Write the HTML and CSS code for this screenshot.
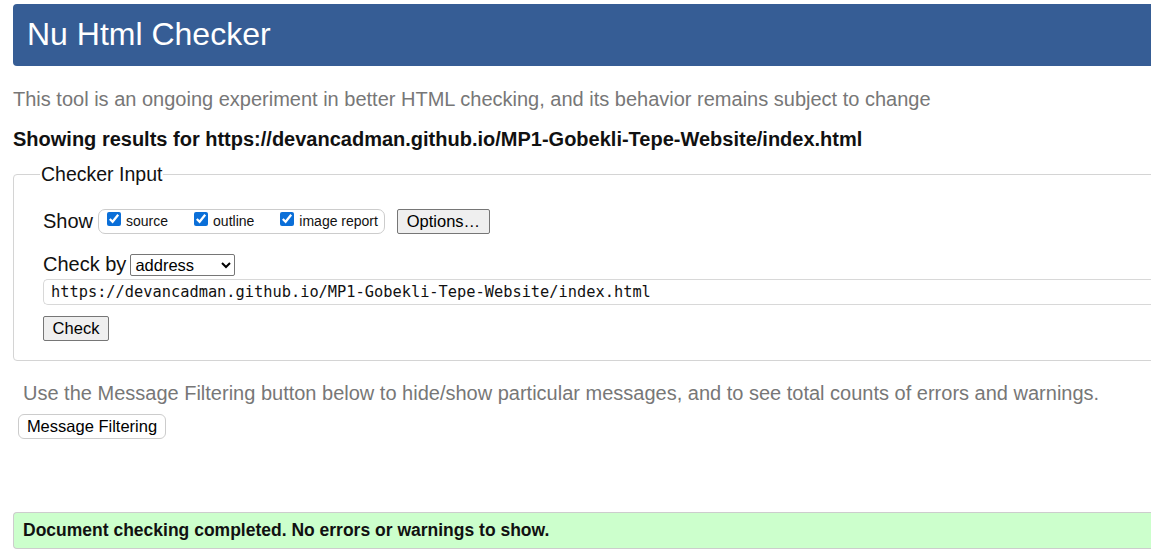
FILE: index.html
```html
<!DOCTYPE html>
<html lang="en">
<head>
<meta charset="utf-8">
<title>Nu Html Checker</title>
<link rel="stylesheet" href="styles.css">
</head>
<body>
<h1 class="title">Nu Html Checker</h1>
<p class="intro">This tool is an ongoing experiment in better HTML checking, and its behavior remains subject to change</p>
<p class="showing">Showing results for https://devancadman.github.io/MP1-Gobekli-Tepe-Website/index.html</p>
<fieldset class="input">
  <legend>Checker Input</legend>
  <div class="row show-row">
    <span class="label">Show</span>
    <span class="pill">
      <label><input type="checkbox" checked> source</label>
      <label><input type="checkbox" checked> outline</label>
      <label><input type="checkbox" checked> image report</label>
    </span>
    <button class="btn options">Options…</button>
  </div>
  <div class="row by-row">
    <span class="label">Check by</span>
    <select class="sel"><option>address</option></select>
  </div>
  <div class="url">https://devancadman.github.io/MP1-Gobekli-Tepe-Website/index.html</div>
  <button class="btn check">Check</button>
</fieldset>
<p class="filter-note">Use the Message Filtering button below to hide/show particular messages, and to see total counts of errors and warnings.</p>
<button class="btn filter">Message Filtering</button>
<div class="success">Document checking completed. No errors or warnings to show.</div>
</body>
</html>
```
FILE: styles.css
```css
html, body { margin: 0; padding: 0; }
body {
  font-family: "Liberation Sans", Arial, sans-serif;
  background: #fff;
  color: #111;
  padding: 4px 0 0 13px;
  width: 1200px;
  overflow: hidden;
}
.title {
  margin: 0;
  height: 62px;
  box-sizing: border-box;
  background: #365d95;
  color: #fff;
  font-weight: normal;
  font-size: 32px;
  line-height: 60px;
  padding-left: 14px;
  border-radius: 4px 0 0 4px;
}
.intro {
  margin: 21px 0 0 0;
  font-size: 20px;
  line-height: 24px;
  color: #777;
}
.showing {
  margin: 16px 0 0 0;
  font-size: 20px;
  line-height: 24px;
  font-weight: bold;
  color: #111;
}
.input {
  margin: 12px 0 0 0;
  border: 1px solid #d4d4d4;
  border-radius: 4px 0 0 4px;
  padding: 4px 0 19px 29px;
  min-width: 0;
}
.input legend {
  font-size: 19.5px;
  padding: 0 1px;
  margin-left: -3px;
}
.row { display: flex; align-items: center; }
.label { font-size: 20px; margin-right: 5px; }
.show-row { margin-top: 18px; height: 26px; }
.pill {
  display: inline-flex;
  align-items: center;
  border: 1px solid #ccc;
  border-radius: 7px;
  height: 23px;
  padding: 0 6px 0 8px;
  font-size: 14px;
}
.pill label { display: inline-flex; align-items: center; margin-right: 26px; }
.pill label:last-child { margin-right: 0; }
.pill input {
  margin: 0 5px 0 0;
  width: 14px; height: 14px;
  accent-color: #0b6fd8;
  position: relative;
  top: -2px;
}
.btn {
  font-family: "Liberation Sans", Arial, sans-serif;
  font-size: 16.5px;
  background: #efefef;
  border: 1px solid #767676;
  border-radius: 2px;
  color: #000;
  padding: 0 8px;
  height: 25px;
}
.options { margin-left: 12px; width: 93px; }
.by-row { margin-top: 19px; height: 23px; }
.sel {
  font-family: "Liberation Sans", Arial, sans-serif;
  font-size: 16.5px;
  height: 22px;
  width: 105px;
  border: 1px solid #767676;
  border-radius: 2px;
  background: #fff;
  margin-left: -1px;
}
.url {
  margin: 3px 0 0 0;
  height: 26px;
  box-sizing: border-box;
  border: 1px solid #d8d8d8;
  border-right: none;
  border-radius: 5px 0 0 5px;
  padding-left: 7px;
  font-family: "DejaVu Sans Mono", "Liberation Mono", monospace;
  font-size: 15.33px;
  line-height: 24px;
}
.check { margin-top: 11px; width: 66px; padding: 0; }
.filter-note {
  margin: 20px 0 0 10px;
  font-size: 20px;
  line-height: 24px;
  color: #777;
}
.filter {
  margin: 9px 0 0 5px;
  background: #fff;
  border: 1px solid #ccc;
  border-radius: 6px;
  height: 25px;
  width: 148px;
  padding: 0;
}
.success {
  margin-top: 73px;
  height: 37px;
  box-sizing: border-box;
  background: #ccffcc;
  border: 1px solid #cdcdcd;
  border-right: none;
  border-radius: 4px 0 0 4px;
  padding-left: 9px;
  font-size: 17.5px;
  font-weight: bold;
  line-height: 35px;
}
```
